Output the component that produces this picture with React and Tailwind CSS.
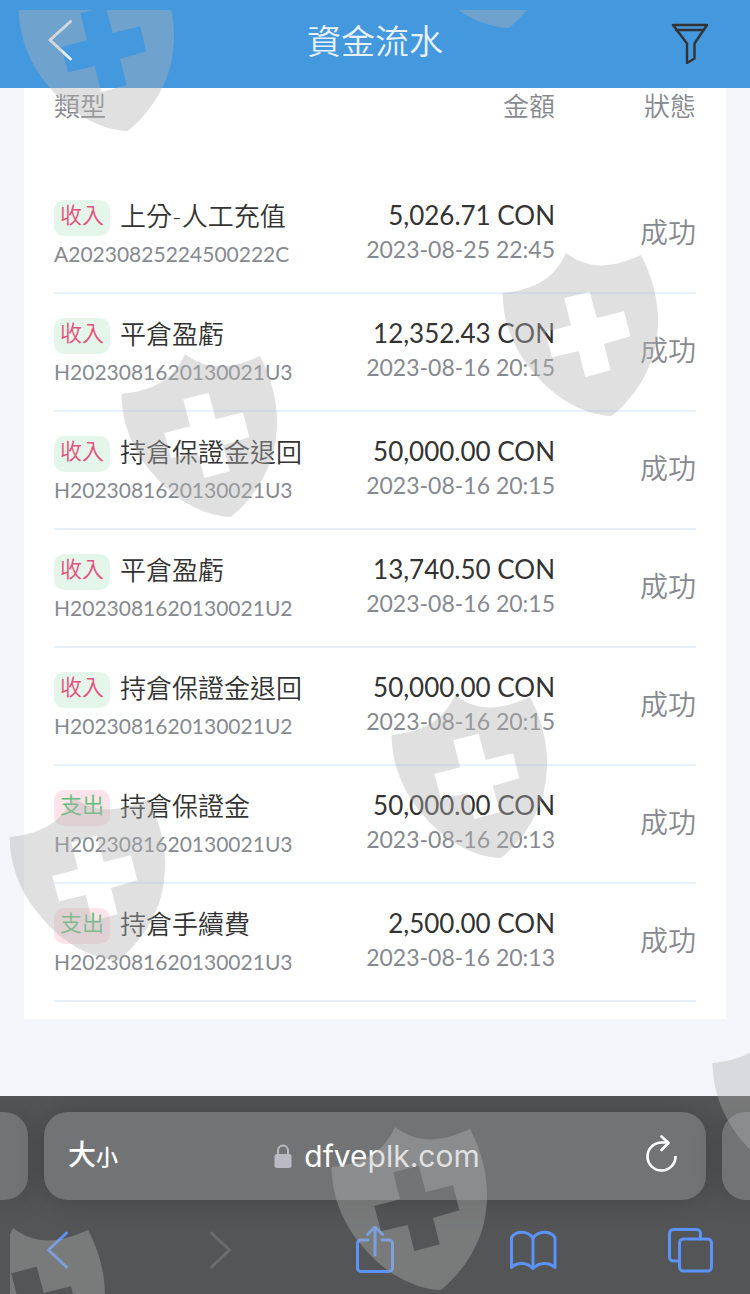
import React from "react";

const IN = "收入";
const OUT = "支出";

const records = [
  { kind: IN, title: "上分-人工充值", id: "A20230825224500222C", amount: "5,026.71 CON", time: "2023-08-25 22:45" },
  { kind: IN, title: "平倉盈虧", id: "H2023081620130021U3", amount: "12,352.43 CON", time: "2023-08-16 20:15" },
  { kind: IN, title: "持倉保證金退回", id: "H2023081620130021U3", amount: "50,000.00 CON", time: "2023-08-16 20:15" },
  { kind: IN, title: "平倉盈虧", id: "H2023081620130021U2", amount: "13,740.50 CON", time: "2023-08-16 20:15" },
  { kind: IN, title: "持倉保證金退回", id: "H2023081620130021U2", amount: "50,000.00 CON", time: "2023-08-16 20:15" },
  { kind: OUT, title: "持倉保證金", id: "H2023081620130021U3", amount: "50,000.00 CON", time: "2023-08-16 20:13" },
  { kind: OUT, title: "持倉手續費", id: "H2023081620130021U3", amount: "2,500.00 CON", time: "2023-08-16 20:13" },
];

const shields = [
  [18, -33],
  [399, -136],
  [502, 252],
  [121, 353],
  [391, 694],
  [9, 796],
  [331, 1126],
  [712, 1022],
  [-51, 1227],
];

function Icon({ children, width = 3 }) {
  return (
    <svg
      className="size-12"
      viewBox="0 0 48 48"
      fill="none"
      stroke="currentColor"
      strokeWidth={width}
      strokeLinecap="round"
      strokeLinejoin="round"
      aria-hidden="true"
    >
      {children}
    </svg>
  );
}

function Header() {
  return (
    <header className="flex h-[88px] items-start justify-between bg-[#4498de] px-9 pt-4 text-[#e9f2fa]">
      <button type="button" aria-label="返回">
        <Icon><path d="M34.500 5.500 14 24l20.500 19" /></Icon>
      </button>
      <h1 className="text-[34px] leading-[50px] font-[350]">資金流水</h1>
      <button type="button" aria-label="篩選" className="text-[#333333]">
        <Icon width={2.4}>
          <path d="M7 9h34L28.500 27.500V42.500l-7.500 4.500V27.500L7 9Z" />
          <path d="M10 14h28" />
        </Icon>
      </button>
    </header>
  );
}

function Row({ record }) {
  const income = record.kind === IN;
  return (
    <tr className="h-[118px] align-top">
      <td className="border-b-2 border-[#e8f1fc] pt-6">
        <div className="flex items-start gap-2.5 font-[350]">
          <span
            className={
              income
                ? "h-9 rounded-[10px] bg-[#e4f6ea] px-1.5 text-[22px] leading-[30px] text-[#e4507c]"
                : "h-9 rounded-[10px] bg-[#fce4ea] px-1.5 text-[22px] leading-[30px] text-[#5cc078]"
            }
          >
            {record.kind}
          </span>
          <span className="text-[26px] leading-8 text-[#333333]">{record.title}</span>
        </div>
        <div className="text-[21px] leading-9">{record.id}</div>
      </td>
      <td className="border-b-2 border-[#e8f1fc] pt-[22px] text-right">
        <div className="text-[26px] leading-[34px] text-[#333333]">{record.amount}</div>
        <div className="text-[23px] leading-[34px]">{record.time}</div>
      </td>
      <td className="border-b-2 border-[#e8f1fc] pt-[38px] text-right text-[28px] leading-9 font-[350]">成功</td>
    </tr>
  );
}

function AddressBar() {
  return (
    <div className="flex gap-4">
      <div className="h-[88px] w-7 rounded-r-3xl bg-[#727375] shadow-[0_0_30px_rgba(0,0,0,0.2)]" />
      <div className="grid h-[88px] flex-1 grid-cols-[1fr_auto_1fr] items-center rounded-3xl bg-[#727375] pr-5 pl-6 text-white shadow-[0_0_30px_rgba(0,0,0,0.2)]">
        <button type="button" className="justify-self-start leading-10 font-medium" aria-label="大小">
          <span className="text-[28px]">大</span>
          <span className="text-[22px]">小</span>
        </button>
        <button type="button" className="flex items-center gap-3 font-['Inter','Liberation_Sans',sans-serif] text-[30px] leading-10">
          <svg className="h-6 w-[18px]" viewBox="0 0 18 24" aria-hidden="true">
            <path d="M4 11V6.500a5 5 0 0 1 10 0V11" fill="none" stroke="#bbb9c2" strokeWidth="2" />
            <rect x="0.500" y="10" width="17" height="14" rx="2.500" fill="#bbb9c2" />
          </svg>
          dfveplk.com
        </button>
        <button type="button" aria-label="重新載入" className="justify-self-end">
          <Icon width={2.6}>
            <path d="M37.500 24A14 14 0 1 1 23.500 10.500h6" strokeLinecap="butt" />
            <path d="M23.500 4.500l7 6.500-7 7" />
          </Icon>
        </button>
      </div>
      <div className="h-[88px] w-7 rounded-l-3xl bg-[#727375] shadow-[0_0_30px_rgba(0,0,0,0.2)]" />
    </div>
  );
}

function Toolbar() {
  return (
    <nav className="flex justify-between px-[34px] text-[#5b93f9]">
      <button type="button" aria-label="上一頁">
        <Icon><path d="M32.500 7 14.500 24l18 17" /></Icon>
      </button>
      <button type="button" aria-label="下一頁" className="text-[#6c6d6f]" disabled>
        <Icon><path d="M18.500 7l18 17-18 17" /></Icon>
      </button>
      <button type="button" aria-label="分享">
        <Icon>
          <path d="M17 14h-7a3.500 3.500 0 0 0-3.500 3.500V42a3.500 3.500 0 0 0 3.500 3.500h28a3.500 3.500 0 0 0 3.500-3.500V17.500A3.500 3.500 0 0 0 38 14h-7" />
          <path d="M24 29V2M16.500 8.500 24 1l7.500 7.500" />
        </Icon>
      </button>
      <button type="button" aria-label="書籤">
        <Icon>
          <path d="M1.500 41.500V11.500C6 4.500 17.500 4.500 23 12C28.500 4.500 40 4.500 45 11.500V41.500C39 36 29 36 23 42.500C17 36 7 36 1.500 41.500Z" />
          <path d="M23 12v30" />
        </Icon>
      </button>
      <button type="button" aria-label="分頁">
        <Icon>
          <rect x="11.500" y="13" width="32" height="32" rx="4" />
          <path d="M11.500 35H5.500a4 4 0 0 1-4-4V7.500a4 4 0 0 1 4-4h23a4 4 0 0 1 4 4V13" />
        </Icon>
      </button>
    </nav>
  );
}

function Watermark() {
  return (
    <div className="pointer-events-none absolute top-[10px] right-0 bottom-0 left-[10px] overflow-hidden" aria-hidden="true">
      <svg className="size-full">
        <defs>
          <path
            id="shield"
            fillRule="evenodd"
            d="M0.500 41C30 38 52 28 64 1C82 14 102 20 139 3C151 26 156 48 156 68C156 88 152 106 144 121C136 138 124 152 111 163Q110 164 108 164C80 162 53 146 32 121C12 98 1 71 0.500 41ZM62.300 46.300 87.700 39.700 94.700 66 122 59.300 128.300 84.300 102 92 108.700 118.300 83.300 125 76.700 99 50 105.300 43.300 80 69 73.300Z"
          />
        </defs>
        <g fill="#b2b2b2" fillOpacity="0.400">
          {shields.map(([x, y]) => (
            <use key={`${x},${y}`} href="#shield" x={x - 10} y={y - 10} />
          ))}
        </g>
      </svg>
    </div>
  );
}

export default function App() {
  return (
    <div className="relative overflow-hidden bg-[#f4f5fa] font-['Lato','Noto_Sans_CJK_TC',sans-serif]">
      <Header />
      <main className="px-6 pb-[77px]">
        <div className="bg-white px-[30px] pb-[17px]">
          <table className="w-full border-separate border-spacing-0 text-[#86898f]">
            <thead>
              <tr className="h-[88px] align-top text-[26px] leading-9">
                <th scope="col" className="text-left font-[350]">類型</th>
                <th scope="col" className="text-right font-[350]">金額</th>
                <th scope="col" className="w-[141px] text-right font-[350]">狀態</th>
              </tr>
            </thead>
            <tbody>
              {records.map((record, i) => (
                <Row key={i} record={record} />
              ))}
            </tbody>
          </table>
        </div>
      </main>
      <footer className="flex flex-col gap-[26px] overflow-hidden bg-[#545556] pt-4 pb-5">
        <AddressBar />
        <Toolbar />
      </footer>
      <Watermark />
    </div>
  );
}
